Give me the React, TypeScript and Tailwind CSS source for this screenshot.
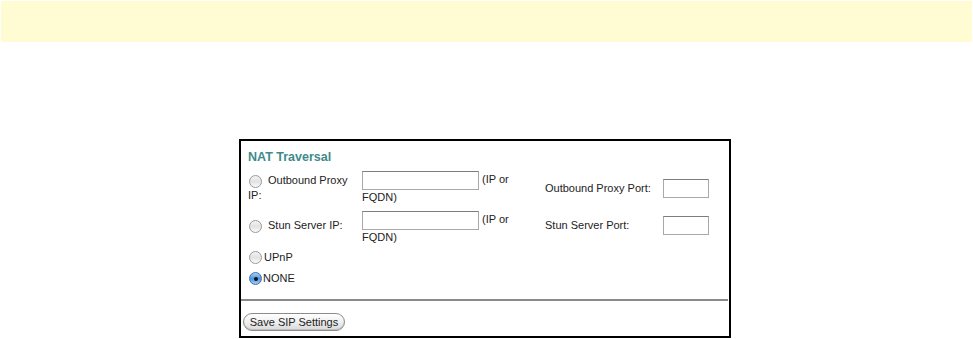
import React from 'react';

// --- Mac-style radio ---
function Radio({ checked = false }: { checked?: boolean }) {
  return checked ? (
    <span className="inline-flex h-[13px] w-[13px] shrink-0 items-center justify-center rounded-full border border-[#3f6fa8] bg-gradient-to-b from-[#a9d2f7] via-[#4b95e0] to-[#9fd0fb] align-middle">
      <span className="h-[4px] w-[4px] rounded-full bg-[#111]" />
    </span>
  ) : (
    <span className="inline-block h-[13px] w-[13px] shrink-0 rounded-full border border-[#9a9a9a] bg-gradient-to-b from-[#f4f4f4] via-[#e2e2e2] to-[#fbfbfb] align-middle" />
  );
}

function TextBox({ w }: { w: string }) {
  return <span className={`inline-block h-[19px] ${w} border border-[#a8a8a8] border-t-[#7d7d7d] bg-white align-middle`} />;
}

export default function App() {
  return (
    <div className="min-h-[339px] w-[973px] bg-white text-[11px] leading-[15px] text-[#222]" style={{ fontFamily: '"Liberation Sans", Arial, sans-serif' }}>
      <div className="pt-px pl-px pr-px">
        <div className="h-[41px] bg-[#fffcd4]" />
      </div>

      <div className="pl-[239px] pt-[97px]">
        <div className="w-[492px] h-[199px] border-2 border-black flex flex-col">
          <div className="pl-[7px] pt-[9px] text-[12.5px] leading-[15px] font-bold text-[#3f8a8c]">NAT Traversal</div>

          {/* --- Proxy / Stun rows --- */}
          <div className="mt-[6px] grid grid-cols-[114px_183px_118px_46px] gap-y-[6px] items-center pl-[7px]">
            <div className="flex flex-col">
              <div className="flex items-center">
                <span className="ml-px mr-[6px]"><Radio /></span>
                <span>Outbound Proxy</span>
              </div>
              <span>IP:</span>
            </div>
            <div className="w-[158px]">
              <TextBox w="w-[117px]" /> (IP or FQDN)
            </div>
            <div>Outbound Proxy Port:</div>
            <div><TextBox w="w-[46px]" /></div>

            <div className="flex items-center pb-[5px]">
              <span className="ml-px mr-[6px]"><Radio /></span>
              <span>Stun Server IP:</span>
            </div>
            <div className="w-[158px]">
              <TextBox w="w-[117px]" /> (IP or FQDN)
            </div>
            <div className="pb-[5px]">Stun Server Port:</div>
            <div className="pb-[5px]"><TextBox w="w-[46px]" /></div>
          </div>

          {/* --- UPnP / NONE --- */}
          <div className="mt-[5px] pl-[8px] flex flex-col gap-[6px]">
            <div className="flex items-center gap-[2px] h-[15px]"><Radio /><span>UPnP</span></div>
            <div className="flex items-center gap-[1px] h-[15px]"><Radio checked /><span>NONE</span></div>
          </div>

          <div className="mt-[13px] mr-px h-[2px] bg-[#8a8a8a]" />

          <div className="pl-[2px] pt-[12px]">
            <button className="h-[18px] w-[102px] rounded-full border border-[#8c8c8c] bg-gradient-to-b from-[#ffffff] via-[#f0f0f0] to-[#d8d8d8] text-[11px] leading-[15px] text-[#222] shadow-[inset_0_-1px_0_#c0c0c0]">
              Save SIP Settings
            </button>
          </div>
        </div>
      </div>
    </div>
  );
}
